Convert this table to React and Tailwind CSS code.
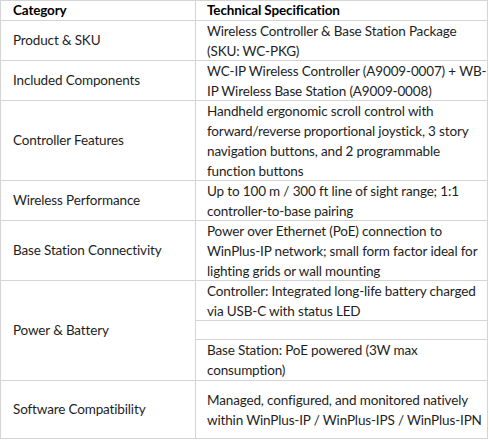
const rows = [
  { cat: 'Product & SKU', h: 'h-[40px]', spec: ['Wireless Controller & Base Station Package', '(SKU: WC-PKG)'] },
  { cat: 'Included Components', h: 'h-[40px]', spec: ['WC-IP Wireless Controller (A9009-0007) + WB-', 'IP Wireless Base Station (A9009-0008)'] },
  {
    cat: 'Controller Features',
    h: 'h-[80px]',
    spec: [
      'Handheld ergonomic scroll control with',
      'forward/reverse proportional joystick, 3 story',
      'navigation buttons, and 2 programmable',
      'function buttons',
    ],
  },
  { cat: 'Wireless Performance', h: 'h-[40px]', spec: ['Up to 100 m / 300 ft line of sight range; 1:1', 'controller-to-base pairing'] },
  {
    cat: 'Base Station Connectivity',
    h: 'h-[60px]',
    spec: [
      'Power over Ethernet (PoE) connection to',
      'WinPlus-IP network; small form factor ideal for',
      'lighting grids or wall mounting',
    ],
  },
]

function Lines({ lines }) {
  return (
    <div className="leading-[20px] whitespace-nowrap">
      {lines.map((l, i) => (
        <div key={i}>{l}</div>
      ))}
    </div>
  )
}

export default function App() {
  return (
    <div
      className="w-[488px] border-l border-t border-[#d4d4d4] text-[13.5px] tracking-[-0.15px] text-[#1e1e1e] bg-white"
      style={{ fontFamily: 'Lato, "Open Sans", sans-serif' }}
    >
      {/* header */}
      <div className="flex h-[20px] border-b border-[#d4d4d4] font-bold text-black">
        <div className="w-[195px] shrink-0 border-r border-[#d4d4d4] pl-[12px] flex items-center">Category</div>
        <div className="flex-1 min-w-0 border-r border-[#d4d4d4] pl-[11px] flex items-center">Technical Specification</div>
      </div>

      {rows.map((r) => (
        <div key={r.cat} className={`flex ${r.h} border-b border-[#d4d4d4]`}>
          <div className="w-[195px] shrink-0 border-r border-[#d4d4d4] pl-[12px] flex items-center">{r.cat}</div>
          <div className="flex-1 min-w-0 overflow-hidden border-r border-[#d4d4d4] pl-[11px]">
            <Lines lines={r.spec} />
          </div>
        </div>
      ))}

      {/* power & battery has three sub rows */}
      <div className="flex h-[100px] border-b border-[#d4d4d4]">
        <div className="w-[195px] shrink-0 border-r border-[#d4d4d4] pl-[12px] flex items-center">Power &amp; Battery</div>
        <div className="flex-1 min-w-0 overflow-hidden border-r border-[#d4d4d4] flex flex-col">
          <div className="h-[40px] border-b border-[#d4d4d4] pl-[11px]">
            <Lines lines={['Controller: Integrated long-life battery charged', 'via USB-C with status LED']} />
          </div>
          <div className="h-[20px] border-b border-[#d4d4d4]" />
          <div className="h-[40px] pl-[11px]">
            <Lines lines={['Base Station: PoE powered (3W max', 'consumption)']} />
          </div>
        </div>
      </div>

      <div className="flex h-[58px] border-b border-[#d4d4d4]">
        <div className="w-[195px] shrink-0 border-r border-[#d4d4d4] pl-[12px] flex items-center">Software Compatibility</div>
        <div className="flex-1 min-w-0 overflow-hidden border-r border-[#d4d4d4] pl-[11px] flex items-center">
          <Lines
            lines={['Managed, configured, and monitored natively', 'within WinPlus-IP / WinPlus-IPS / WinPlus-IPN']}
          />
        </div>
      </div>
    </div>
  )
}
